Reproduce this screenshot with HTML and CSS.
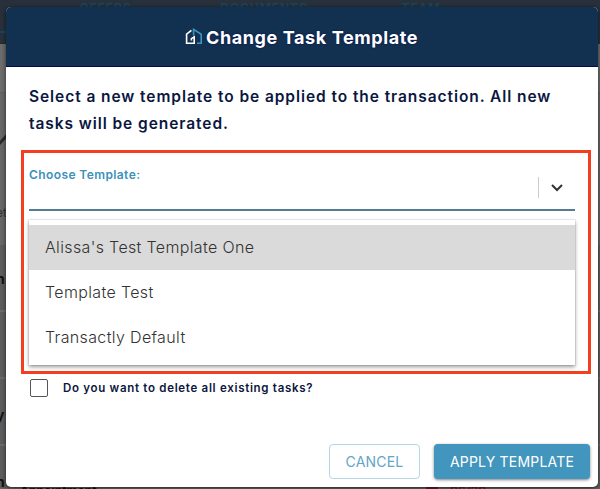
FILE: index.html
```
<!DOCTYPE html>
<html lang="en">
<head>
    <meta charset="UTF-8">
    <meta name="viewport" content="width=device-width, initial-scale=1.0">
    <title>Change Task Template</title>
    <link rel="stylesheet" href="styles.css">
</head>
<body>
    <div class="page">
        <div class="tabs">
            <span class="tab active"></span>
            <span class="tab">OFFERS</span>
            <span class="tab">DOCUMENTS</span>
            <span class="tab">TEAM</span>
        </div>
        <div class="content">
            <div class="toolbar"></div>
            <div class="summary">
                <svg class="chart-line" width="12" height="20" viewBox="0 0 12 20">
                    <path d="M-2 11 L12 -4" fill="none" stroke="#292929" stroke-width="3"/>
                </svg>
                <span>et</span>
            </div>
            <div class="row first"><span>n</span></div>
            <div class="row"><span>i</span></div>
            <div class="row"><span>y</span></div>
            <div class="row last"><span>n</span></div>
            <div class="footer-line">
                <span class="address">Appointment</span>
                <span class="flag"></span>
                <span class="date">06/30</span>
            </div>
        </div>
    </div>

    <div class="modal">
        <div class="modal-header">
            <svg class="logo" width="18" height="18" viewBox="0 0 18 18" fill="none" stroke-width="1.6">
                <path d="M6.4 2.4 L1.6 6.2 V15.2 H9.2 V9 L6.4 10.6 V12.4" stroke="#ffffff"/>
                <path d="M8.6 7.4 V1.4 L16.2 6.2 V15.2 H12" stroke="#3d94bf"/>
            </svg>
            <h1>Change Task Template</h1>
        </div>

        <div class="modal-body">
            <p class="description">
                Select a new template to be applied to the transaction. All new<br>
                tasks will be generated.
            </p>

            <div class="highlight">
                <div class="select">
                    <label>Choose Template:</label>
                    <div class="select-indicator">
                        <svg width="14" height="10" viewBox="0 0 14 10">
                            <path d="M2 2 L7 7 L12 2" fill="none" stroke="#333" stroke-width="2"/>
                        </svg>
                    </div>
                </div>
                <div class="options">
                    <div class="option selected">Alissa's Test Template One</div>
                    <div class="option">Template Test</div>
                    <div class="option">Transactly Default</div>
                </div>
            </div>

            <div class="checkbox-row">
                <span class="checkbox"></span>
                <span class="checkbox-label">Do you want to delete all existing tasks?</span>
            </div>
        </div>

        <div class="modal-actions">
            <button class="btn cancel">CANCEL</button>
            <button class="btn apply">APPLY TEMPLATE</button>
        </div>
    </div>
</body>
</html>
```
FILE: styles.css
```
* {
    box-sizing: border-box;
}

body {
    margin: 0;
    width: 600px;
    height: 489px;
    overflow: hidden;
    position: relative;
    font-family: Inter, "Open Sans", sans-serif;
    background: #666;
}

/* Page under the overlay */
.page {
    height: 489px;
    overflow: hidden;
}

.tabs {
    height: 44px;
    background: #27303b;
    display: grid;
    grid-template-columns: 35px 141px 176px 138px;
    border-bottom: 1px solid #222b36;
}

.tab {
    color: #19445d;
    font-size: 12.5px;
    font-weight: 600;
    line-height: 17px;
    letter-spacing: 0.6px;
    text-align: center;
}

.tab.active {
    height: 33px;
    border-bottom: 2px solid #19445d;
}

.content {
    background: #636363;
    color: #111;
    height: 445px;
}

.toolbar {
    height: 49px;
    background: #6c6c6c;
    border-bottom: 1px solid #5e5e5e;
}

.summary {
    height: 152px;
    padding-top: 41px;
    font-size: 12px;
    color: #303030;
    background: #666;
}

.summary span {
    display: block;
    margin-top: 51px;
    margin-left: -4px;
}

.chart-line {
    display: block;
}

.row {
    height: 67px;
    padding-top: 27px;
    border-bottom: 2px solid #6b6b6b;
    background: #5c5c5c;
    font-size: 14px;
    font-weight: 700;
    line-height: 18px;
    overflow: hidden;
}

.row.first {
    padding-top: 25px;
}

.row span {
    margin-left: -4px;
}

.row.last {
    height: 42px;
    border: none;
}

.footer-line {
    display: flex;
    height: 14px;
    margin-top: -4px;
    padding-left: 20px;
    font-size: 12px;
    font-weight: 700;
    line-height: 14px;
}

.address {
    width: 406px;
}

.flag {
    width: 12px;
    height: 10px;
    margin-top: 2px;
    margin-right: 12px;
    background: #641f28;
}

.date {
    color: #641f28;
}

/* Dialog */
.modal {
    position: absolute;
    top: 7px;
    left: 6px;
    width: 592px;
    height: 480px;
    display: flex;
    flex-direction: column;
    background: #fff;
    border-radius: 5px;
    box-shadow: 0 1px 4px rgba(0,0,0,0.6);
    overflow: hidden;
}

.modal-header {
    height: 60px;
    display: flex;
    align-items: center;
    justify-content: center;
    gap: 3px;
    background: #123150;
    border-bottom: 1px solid #06094d;
}

.modal-header h1 {
    margin: 0;
    width: 213px;
    padding-top: 1px;
    color: #fff;
    font-size: 18px;
    font-weight: 700;
    letter-spacing: 0.6px;
    white-space: nowrap;
    text-shadow: 0 0 2px #06094d;
}

.modal-body {
    padding: 16px 7px 0 15px;
}

.description {
    margin: 0 0 13px 8px;
    color: #0b1740;
    font-size: 15.5px;
    font-weight: 600;
    line-height: 27px;
    letter-spacing: 0.93px;
    white-space: nowrap;
}

.highlight {
    height: 224px;
    padding: 0 13px 0 5px;
    border: 3px solid #f13f20;
}

.select {
    height: 58px;
    display: flex;
    justify-content: space-between;
    border-bottom: 2px solid #547c94;
}

.select label {
    margin-top: 14px;
    color: #3d91ba;
    font-size: 12px;
    font-weight: 600;
    line-height: 16px;
    letter-spacing: 0.4px;
}

.select-indicator {
    width: 37px;
    height: 21px;
    margin-top: 24px;
    display: flex;
    align-items: center;
    padding-left: 11px;
    border-left: 1px solid #ccc;
}

.options {
    height: 145px;
    margin-top: 9px;
    padding-top: 5px;
    background: #fff;
    box-shadow: 0 0 0 1px rgba(0,0,0,0.06), 0 2px 4px rgba(0,0,0,0.4);
}

.option {
    height: 45px;
    padding-left: 16px;
    color: #333;
    font-size: 16px;
    font-weight: 300;
    line-height: 45px;
    letter-spacing: 0.35px;
}

.option.selected {
    background: #dadada;
}

.checkbox-row {
    height: 28px;
    display: flex;
    align-items: center;
    padding-left: 9px;
}

.checkbox {
    width: 18px;
    height: 18px;
    margin-right: 15px;
    border: 1.5px solid #555;
    border-radius: 2px;
}

.checkbox-label {
    color: #0b1740;
    font-size: 11.5px;
    font-weight: 600;
    letter-spacing: 0.7px;
}

.modal-actions {
    margin-top: auto;
    padding: 0 8px 8px 0;
    display: flex;
    justify-content: flex-end;
    gap: 14px;
}

.btn {
    height: 35px;
    padding: 0;
    border: none;
    border-radius: 4px;
    font-family: inherit;
    font-size: 14px;
    letter-spacing: 0.2px;
    white-space: nowrap;
}

.btn.cancel {
    width: 91px;
    color: #62a5c7;
    background: #fff;
    border: 1px solid #b5d7e6;
}

.btn.apply {
    width: 156px;
    color: #fff;
    background: #4295bd;
    box-shadow: 0 1px 3px rgba(0,0,0,0.5);
}
```
